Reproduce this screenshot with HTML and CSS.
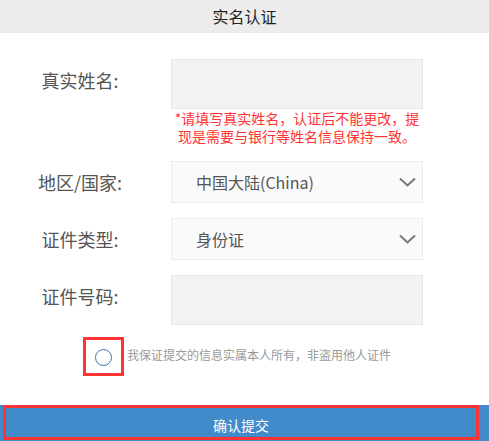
FILE: index.html
```html
<!DOCTYPE html>
<html lang="zh-CN">
<head>
<meta charset="utf-8">
<title>实名认证</title>
<link rel="stylesheet" href="styles.css">
</head>
<body>
<header class="topbar">实名认证</header>
<main class="form">
  <div class="row">
    <label class="label">真实姓名:</label>
    <div class="field">
      <div class="input"></div>
      <p class="hint">*请填写真实姓名，认证后不能更改，提现是需要与银行等姓名信息保持一致。</p>
    </div>
  </div>
  <div class="row">
    <label class="label">地区/国家:</label>
    <div class="field">
      <div class="select">
        <span>中国大陆(China)</span>
        <svg class="chev" width="17" height="10" viewBox="0 0 17 10"><path d="M1 1.5 L8.5 8.5 L16 1.5" fill="none" stroke="#777" stroke-width="2"/></svg>
      </div>
    </div>
  </div>
  <div class="row">
    <label class="label">证件类型:</label>
    <div class="field">
      <div class="select">
        <span>身份证</span>
        <svg class="chev" width="17" height="10" viewBox="0 0 17 10"><path d="M1 1.5 L8.5 8.5 L16 1.5" fill="none" stroke="#777" stroke-width="2"/></svg>
      </div>
    </div>
  </div>
  <div class="row">
    <label class="label">证件号码:</label>
    <div class="field">
      <div class="input"></div>
    </div>
  </div>
  <div class="agree">
    <span class="check"><span class="circle"></span></span>
    <span class="agree-text">我保证提交的信息实属本人所有，非盗用他人证件</span>
  </div>
</main>
<div class="submit-bar">
  <div class="submit">确认提交</div>
</div>
</body>
</html>
```

FILE: styles.css
```css
* { box-sizing: border-box; }
html, body { margin: 0; padding: 0; background: #fff; }
body {
  font-family: "Noto Sans CJK SC", "Noto Sans", sans-serif;
  overflow: hidden;
}
.topbar {
  height: 33px;
  line-height: 33px;
  background: #ececec;
  text-align: center;
  font-size: 16px;
  color: #222;
}
.form {
  padding-top: 26px;
}
.row {
  display: flex;
  align-items: flex-start;
  margin-bottom: 15px;
}
.row:first-child { margin-bottom: 16px; }
.label {
  width: 160px;
  text-align: center;
  font-size: 18px;
  line-height: 42px;
  color: #555;
}
.field {
  margin-left: 11px;
  width: 252px;
}
.input {
  height: 50px;
  background: #f3f3f3;
  border: 1px solid #e6e6e6;
}
.hint {
  margin: 0;
  font-size: 14px;
  line-height: 18px;
  color: #ff3333;
  text-align: center;
}
.select {
  height: 42px;
  background: #fafafa;
  border: 1px solid #ececec;
  display: flex;
  align-items: center;
  justify-content: space-between;
  padding: 0 6px 0 24px;
  font-size: 16px;
  color: #555;
}
.chev { display: block; }
.agree {
  display: flex;
  align-items: center;
  margin-top: -3px;
  padding-left: 83px;
}
.check {
  width: 41px;
  height: 39px;
  border: 3px solid #f33;
  display: flex;
  align-items: center;
  justify-content: center;
}
.circle {
  width: 17px;
  height: 17px;
  border-radius: 50%;
  border: 1.5px solid #3d74b0;
  margin-top: 1px;
}
.agree-text {
  margin-left: 3px;
  font-size: 12px;
  line-height: 16px;
  color: #999;
  margin-top: -3px;
}
.submit-bar {
  margin-top: 29px;
  background: #428bca;
  height: 42px;
}
.submit {
  margin-left: 3px;
  width: 476px;
  height: 35px;
  border: 3px solid #f33;
  padding-top: 7px;
  line-height: 20px;
  text-align: center;
  color: #fff;
  font-size: 14px;
}
```
